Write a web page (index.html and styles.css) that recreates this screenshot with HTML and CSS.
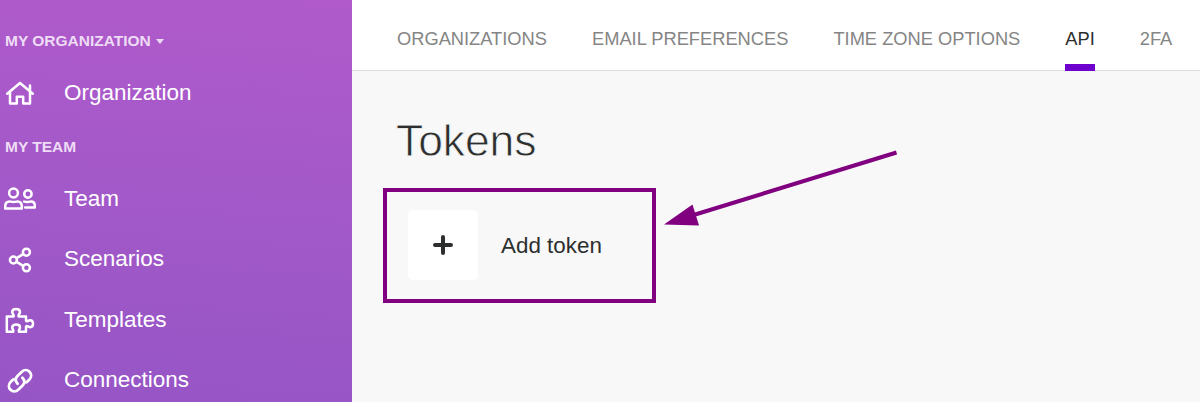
FILE: index.html
```html
<!DOCTYPE html>
<html lang="en">
<head>
<meta charset="utf-8">
<title>API Tokens</title>
<link rel="stylesheet" href="styles.css">
</head>
<body>
<div class="app">
  <aside class="sidebar">
    <div class="section-title section-title-org">MY ORGANIZATION<span class="caret"></span></div>
    <a class="nav-item nav-item-org">
      <svg class="icon" viewBox="0 0 40 40"><path d="M7.2 20.7 20 10 32.8 20.7M10 18.8V30.4H16.8V23.8H23.2V30.4H30V18.8M30 17V12.6"/></svg>
      <span>Organization</span>
    </a>
    <div class="section-title section-title-team">MY TEAM</div>
    <nav class="team-nav">
      <a class="nav-item">
        <svg class="icon" viewBox="0 0 40 40"><circle cx="13.5" cy="14" r="4.4"/><circle cx="27.9" cy="15" r="3.7"/><path d="M5.2 29.6V27.4Q5.2 22.4 9.6 22.4Q13.5 23.6 17.4 22.4Q21.8 22.4 21.8 27.4V29.6ZM24.2 22.6Q28 23.6 30.8 22.4Q34.8 22.4 34.8 26.5V28.4H25.2"/></svg>
        <span>Team</span>
      </a>
      <a class="nav-item">
        <svg class="icon" viewBox="0 0 40 40"><circle cx="13.4" cy="20" r="3.5"/><circle cx="26.4" cy="12.2" r="3.5"/><circle cx="26.4" cy="27.8" r="3.5"/><path d="M16.6 18.1 23.2 14.1M16.6 21.9 23.2 25.9"/></svg>
        <span>Scenarios</span>
      </a>
      <a class="nav-item">
        <svg class="icon" viewBox="0 0 40 40"><path d="M6.8 16.4H13.6C14.6 14.8 12.2 14 12.2 12C12.2 9.8 14 9 16.1 9S20 9.8 20 12C20 14 17.6 14.8 18.6 16.4H26V20.6C27 22.4 28 20.2 30.2 20.2C32.2 20.2 33 21.8 33 23.8S32.2 27.2 30.2 27.2C28 27.2 27 24.8 26 26.8V31.8H19C18 30.2 20 29.4 20 27.4C20 25.4 18.2 24.6 16.1 24.6S12.2 25.4 12.2 27.4C12.2 29.4 14.2 30.2 13.2 31.8H6.8Z"/></svg>
        <span>Templates</span>
      </a>
      <a class="nav-item">
        <svg class="icon icon-link" viewBox="0 0 40 40"><path d="M17.6 22.7C15 20 15.2 17.4 17.2 15.3L21.8 10.7C24 8.6 27.4 8.6 29.5 10.7S31.6 16.2 29.5 18.4L26.5 21.3M22.4 16.8C25 19.5 24.8 22.1 22.8 24.2L18.2 28.8C16 30.9 12.6 30.9 10.5 28.8S8.4 23.3 10.5 21.1L13.2 18.4"/></svg>
        <span>Connections</span>
      </a>
    </nav>
  </aside>
  <main class="main">
    <nav class="tabs">
      <a class="tab">ORGANIZATIONS</a>
      <a class="tab">EMAIL PREFERENCES</a>
      <a class="tab">TIME ZONE OPTIONS</a>
      <a class="tab tab-active">API</a>
      <a class="tab">2FA</a>
    </nav>
    <section class="content">
      <h1 class="heading">Tokens</h1>
      <div class="add-token">
        <button class="add-button" aria-label="Add token"><svg class="plus" viewBox="0 0 20 20"><path d="M10 2V18M2 10H18"/></svg></button>
        <span class="add-label">Add token</span>
      </div>
    </section>
  </main>
  <svg class="arrow" viewBox="0 0 240 84"><path class="arrow-line" d="M236.5 7.5 32 70.5"/><path class="arrow-head" d="M4 79.5 32.5 59.5 39 80.5Z"/></svg>
</div>
</body>
</html>
```

FILE: styles.css
```css
* {
  box-sizing: border-box;
}

body {
  margin: 0;
  font-family: "Liberation Sans", Arial, sans-serif;
  color: #2d2f2f;
}

.app {
  position: relative;
  display: flex;
  height: 402px;
  overflow: hidden;
}

.sidebar {
  width: 352px;
  flex: none;
  background: linear-gradient(184deg, #b05acb 0%, #a459c9 45%, #9655c5 100%);
  color: #fff;
}

.section-title {
  display: flex;
  align-items: center;
  height: 20px;
  padding-left: 5px;
  font-size: 15.5px;
  font-weight: bold;
  color: #eedcf5;
}

.section-title-org {
  margin-top: 31px;
}

.section-title-team {
  margin-top: 24px;
}

.caret {
  margin-left: 5px;
  border: 4.5px solid transparent;
  border-width: 5px 4.5px 0;
  border-top-color: #eedcf5;
}

.nav-item {
  display: flex;
  align-items: center;
  gap: 24px;
  height: 60.5px;
  font-size: 22.5px;
}

.nav-item-org {
  height: 40px;
  margin-top: 22px;
}

.nav-item span {
  padding-bottom: 1px;
}

.team-nav {
  margin-top: 12px;
}

.icon {
  width: 40px;
  height: 40px;
  fill: none;
  stroke: #fff;
  stroke-width: 2.5;
  stroke-linecap: round;
  stroke-linejoin: round;
}

.icon-link {
  stroke-width: 2.8;
}

.main {
  flex: 1;
  background: #f8f8f8;
}

.tabs {
  display: flex;
  gap: 45px;
  height: 71px;
  padding-left: 45px;
  background: #fff;
  border-bottom: 1px solid #dddde2;
}

.tab {
  height: 71px;
  padding-top: 4px;
  border-bottom: 7px solid transparent;
  font-size: 18.3px;
  line-height: 70px;
  color: #858585;
  white-space: nowrap;
}

.tab-active {
  color: #2d2f2f;
  border-bottom-color: #6d00cc;
}

.content {
  padding: 44px 0 0 31px;
}

.heading {
  margin: 0 0 21px 13px;
  font-size: 44.5px;
  line-height: 52px;
  font-weight: normal;
  letter-spacing: -0.1px;
  -webkit-text-stroke: 0.8px #f8f8f8;
}

.add-token {
  display: flex;
  align-items: center;
  gap: 23px;
  width: 273px;
  height: 115px;
  padding: 0 0 1px 21px;
  border: 4px solid #800080;
}

.add-button {
  display: flex;
  align-items: center;
  justify-content: center;
  width: 70px;
  height: 70px;
  padding: 0;
  border: 0;
  border-radius: 5px;
  background: #fff;
}

.plus {
  width: 20px;
  height: 20px;
  fill: none;
  stroke: #2d2f2f;
  stroke-width: 4;
  stroke-linecap: round;
}

.add-label {
  padding-top: 2px;
  font-size: 22.4px;
}

.arrow {
  position: absolute;
  left: 660px;
  top: 145px;
  width: 240px;
  height: 84px;
}

.arrow-line {
  stroke: #800080;
  stroke-width: 4;
}

.arrow-head {
  fill: #800080;
}
```
